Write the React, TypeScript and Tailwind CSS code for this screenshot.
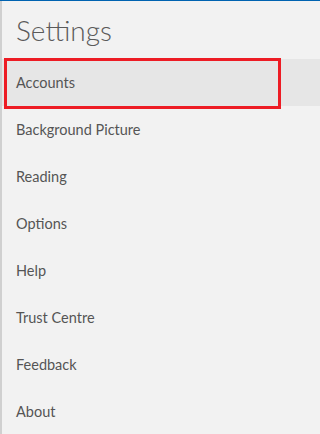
import React from 'react'

const items = ['Accounts', 'Background Picture', 'Reading', 'Options', 'Help', 'Trust Centre', 'Feedback', 'About']

export default function App() {
    return (
        <div className="w-[320px] h-[434px] overflow-hidden bg-[#f2f2f2] border-t border-[#0063b1] flex" style={{ fontFamily: 'Lato, "Open Sans", sans-serif' }}>
            <div className="w-[2px] bg-[#d0d0d0] shrink-0" />
            <div className="flex-1 flex flex-col">
                {/* Header */}
                <div className="h-[58px] pl-[14px] flex items-center">
                    <h1 className="text-[28px] font-light text-[#5a5a5a] leading-none mt-[1px]">Settings</h1>
                </div>

                {items.map((label, i) => (
                    <div
                        key={label}
                        className={`relative h-[47px] pl-[14px] pt-[2px] flex items-center text-[14.5px] text-[#555555] ${i === 0 ? 'bg-[#e6e6e6]' : ''}`}
                    >
                        {label}
                        {i === 0 && (
                            <div className="absolute left-[2px] top-[-1px] w-[277px] h-[51px] border-[3px] border-[#ed1c24] pointer-events-none" />
                        )}
                    </div>
                ))}
            </div>
        </div>
    )
}
